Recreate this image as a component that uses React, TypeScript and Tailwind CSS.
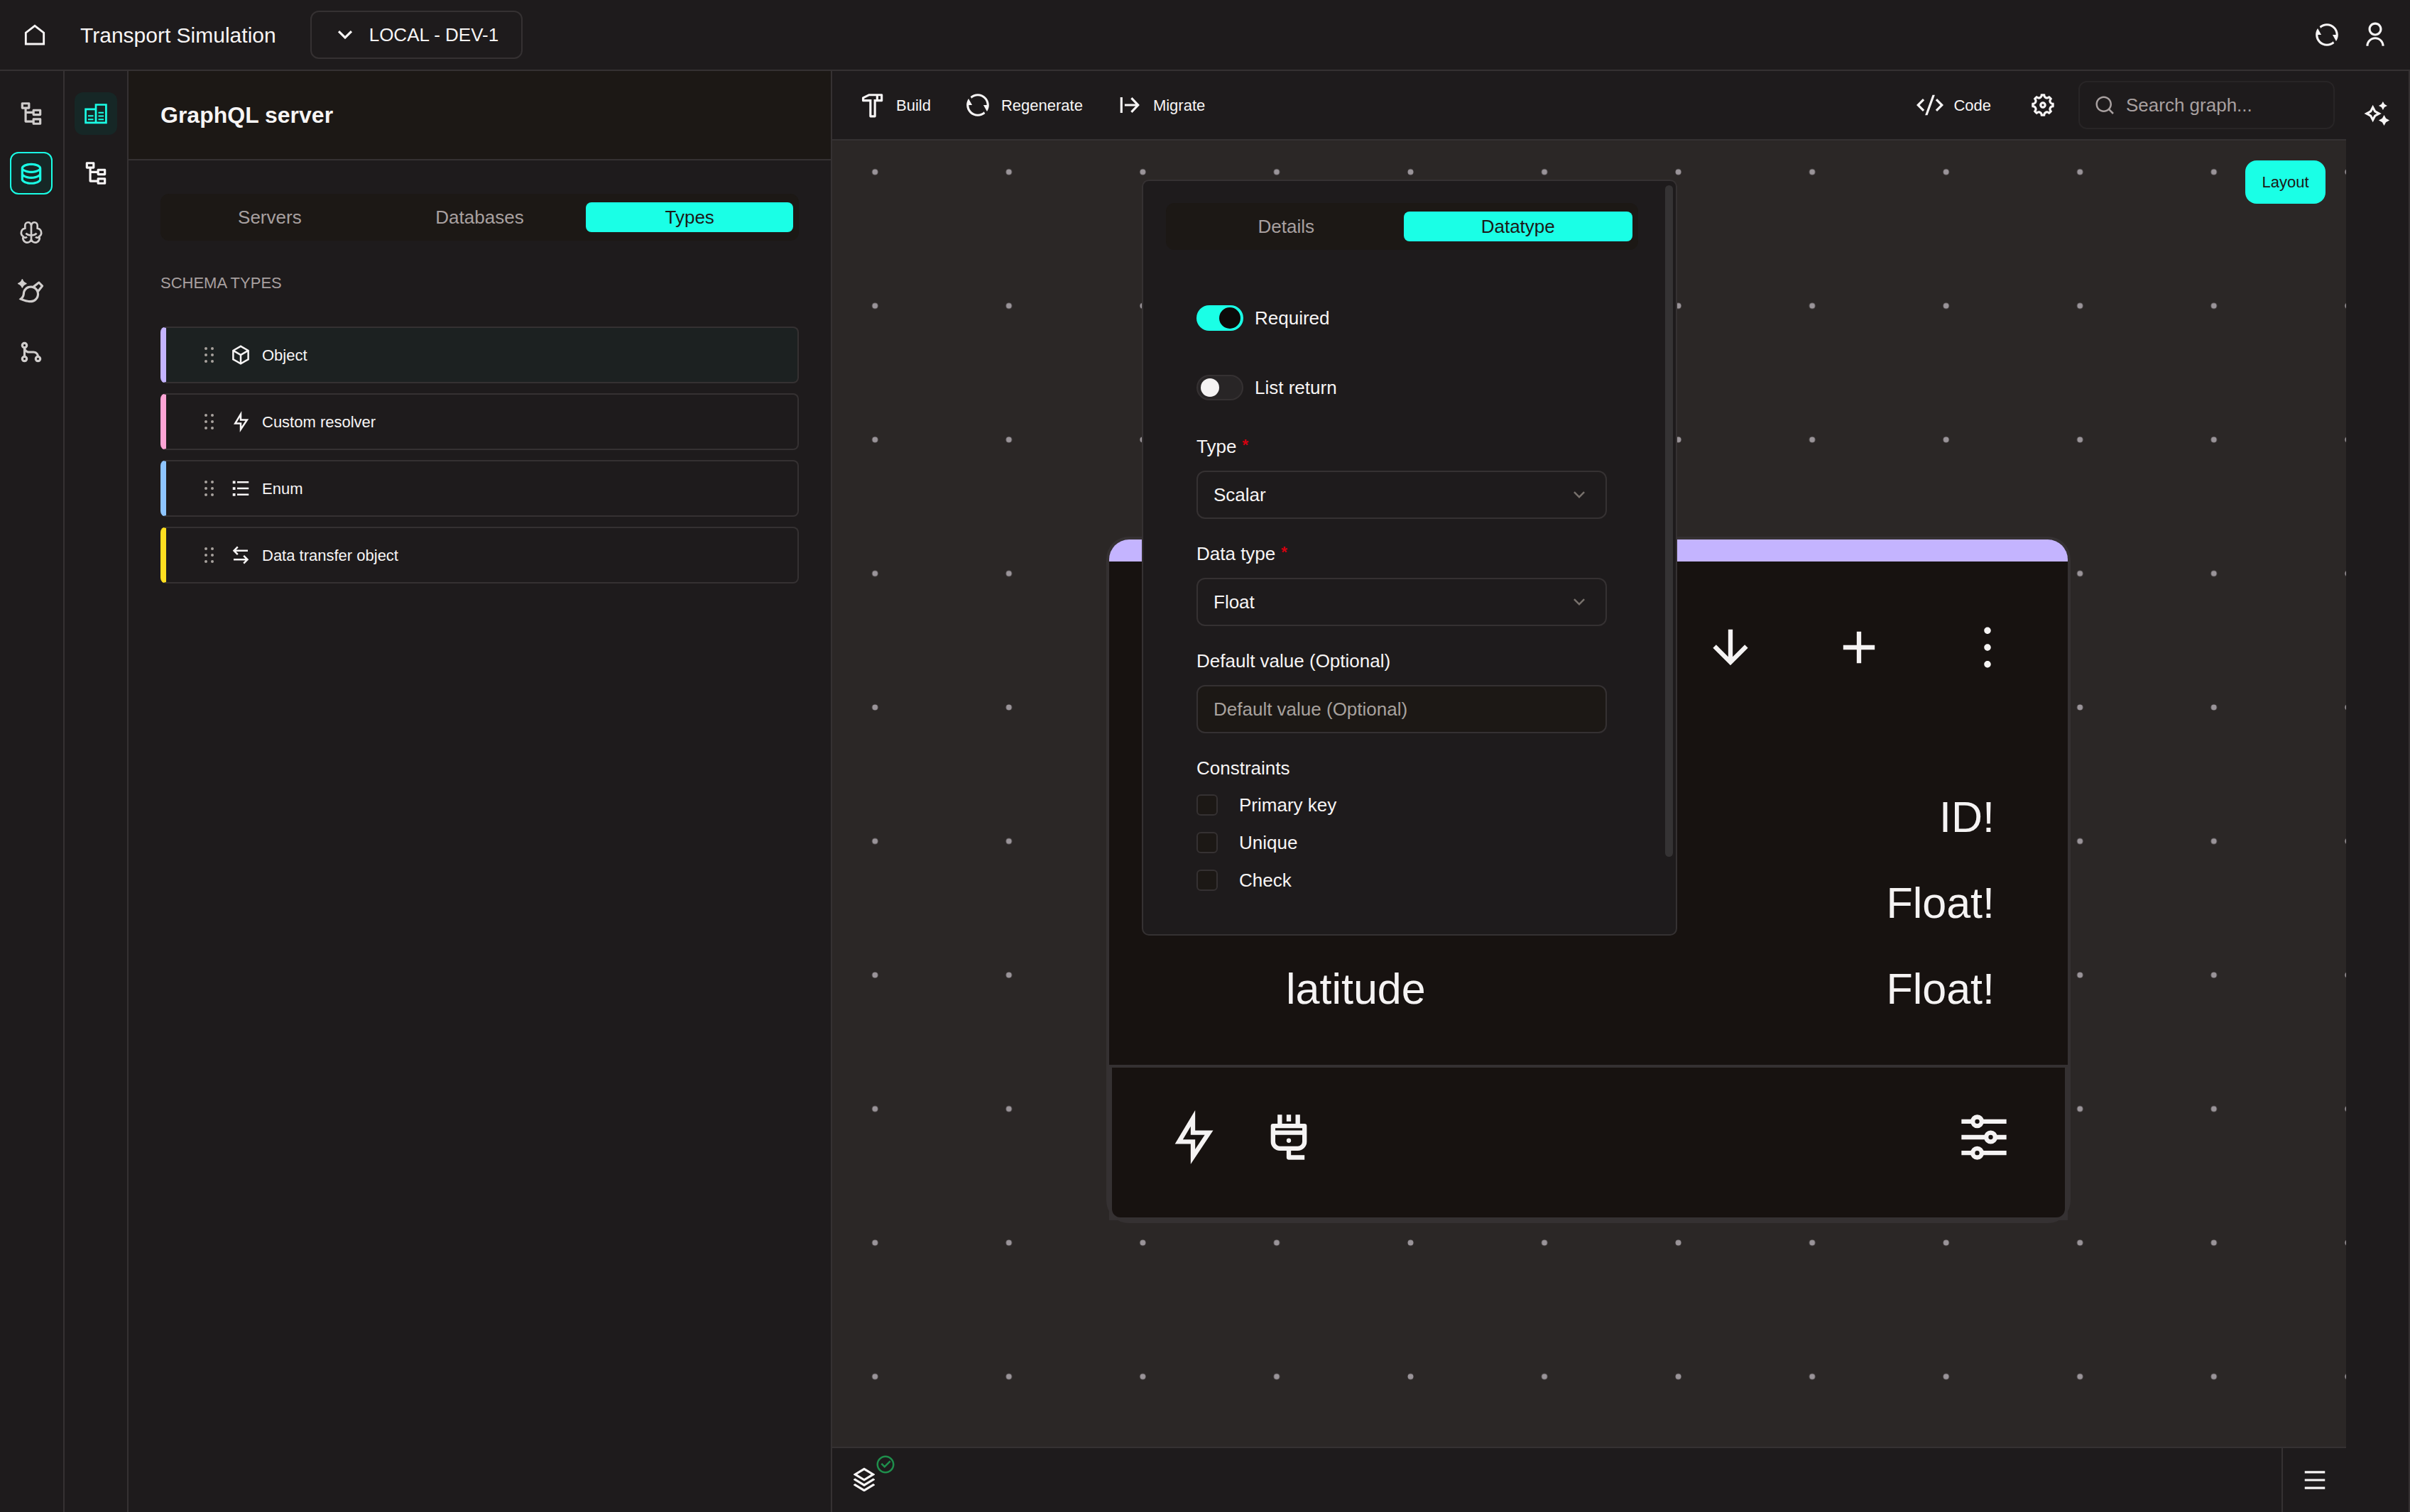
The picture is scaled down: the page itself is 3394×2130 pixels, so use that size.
import type { ReactNode } from "react";
import {
  RiAddLine,
  RiArrowDownLine,
  RiArrowDownSLine,
  RiArrowLeftRightLine,
  RiBox3Line,
  RiBrushAiLine,
  RiCheckboxCircleLine,
  RiCodeSSlashLine,
  RiDatabase2Line,
  RiFlashlightLine,
  RiGitMergeLine,
  RiHammerLine,
  RiListCheck,
  RiMenuLine,
  RiMore2Line,
  RiNodeTree,
  RiRefreshLine,
  RiSearchLine,
  RiSettings5Line,
  RiSparkling2Line,
  RiStackLine,
  RiUserLine,
} from "react-icons/ri";

const icon = "size-[38px] shrink-0";
const bigIcon = "size-[76px] shrink-0";

function HomeIcon() {
  return (
    <svg viewBox="0 0 24 24" className={icon} fill="none" stroke="currentColor" strokeWidth="1.8">
      <path d="M4 20.2V10.2L12 4L20 10.2V20.2Z" />
    </svg>
  );
}

function ServersIcon() {
  return (
    <svg viewBox="0 0 24 24" className={icon} fill="none" stroke="currentColor" strokeWidth="1.7">
      <path d="M12 20.1H2.9V8.1H12M12 20.1V4.1H21.1V20.1Z" />
      <path d="M5 14H9.8M5 17.2H9.8M14.2 11.2H19M14.2 14.2H19M14.2 17.2H19" strokeWidth="1.3" />
    </svg>
  );
}

const brainHalf =
  "M12 5.3A2.7 2.7 0 0 0 6.5 5.6V8A4 4 0 0 0 4.9 15.3A3.6 3.6 0 1 0 12 18.2M7.2 12.4Q9 14.3 12 14.2M5 15.6Q6.6 17 8.2 15.6";

function BrainIcon() {
  return (
    <svg viewBox="0 0 24 24" className={icon} fill="none" stroke="currentColor" strokeWidth="1.7">
      <path d="M12 4V20" />
      <path d={brainHalf} />
      <path d={brainHalf} transform="matrix(-1 0 0 1 24 0)" />
    </svg>
  );
}

function MigrateIcon() {
  return (
    <svg viewBox="0 0 24 24" className={icon} fill="none" stroke="currentColor" strokeWidth="2">
      <path d="M4.6 5V19M7.5 12H19M13.5 5.8L19.4 12L13.5 18.2" />
    </svg>
  );
}

function PlugIcon() {
  return (
    <svg viewBox="0 0 24 24" className={bigIcon} fill="none" stroke="currentColor" strokeWidth="2">
      <path d="M5 7H19V14A3 3 0 0 1 16 17H8A3 3 0 0 1 5 14Z" strokeLinejoin="round" />
      <path d="M5 10H19M8 2V6M12 2V5M16 2V6" />
      <path d="M12 17V21H19" strokeLinejoin="round" />
      <circle cx="12" cy="13.5" r="1" fill="currentColor" stroke="none" />
    </svg>
  );
}

function SlidersIcon() {
  return (
    <svg viewBox="0 0 24 24" className={bigIcon} fill="none" stroke="currentColor" strokeWidth="2">
      <path d="M2 5H7M11 5H22M2 12H13M17 12H22M2 19H7M11 19H22" />
      <circle cx="9" cy="5" r="2" />
      <circle cx="15" cy="12" r="2" />
      <circle cx="9" cy="19" r="2" />
    </svg>
  );
}

function Grip() {
  return (
    <svg viewBox="0 0 14 22" className="h-[22px] w-[14px] shrink-0 text-[#a8a29e]" fill="currentColor">
      {[2, 11].map((x) => [2, 11, 20].map((y) => <circle key={`${x}-${y}`} cx={x} cy={y} r="2" />))}
    </svg>
  );
}

function Header() {
  return (
    <header className="flex h-[100px] shrink-0 items-center border-b-2 border-[#353132] px-[30px]">
      <button aria-label="Home">
        <HomeIcon />
      </button>
      <h1 className="ml-[45px] text-[30px]">Transport Simulation</h1>
      <button className="ml-12 flex h-[68px] items-center gap-[15px] rounded-xl border-2 border-[#353132] pr-8 pl-7 text-[26px]">
        <RiArrowDownSLine className={icon} />
        LOCAL - DEV-1
      </button>
      <div className="ml-auto flex gap-[30px]">
        <button aria-label="Refresh">
          <RiRefreshLine className={icon} />
        </button>
        <button aria-label="Account">
          <RiUserLine className={icon} />
        </button>
      </div>
    </header>
  );
}

function RailButton({ label, className = "", children }: { label: string; className?: string; children: ReactNode }) {
  return (
    <button aria-label={label} className={`flex size-[60px] items-center justify-center rounded-xl ${className}`}>
      {children}
    </button>
  );
}

function MainRail() {
  return (
    <nav className="flex w-[91px] shrink-0 flex-col items-start gap-6 border-r-2 border-[#353132] pt-[30px] pl-[14px] text-[#d0cdcc]">
      <RailButton label="Project tree">
        <RiNodeTree className={icon} />
      </RailButton>
      <RailButton label="Data" className="border-2 border-[#1affe6] bg-[#162726] text-[#1affe6]">
        <RiDatabase2Line className={icon} />
      </RailButton>
      <RailButton label="Models">
        <BrainIcon />
      </RailButton>
      <RailButton label="Design">
        <RiBrushAiLine className={icon} />
      </RailButton>
      <RailButton label="Versions">
        <RiGitMergeLine className={icon} />
      </RailButton>
    </nav>
  );
}

function SubRail() {
  return (
    <nav className="flex w-[90px] shrink-0 flex-col items-center gap-6 border-r-2 border-[#353132] pt-[30px]">
      <RailButton label="Servers" className="bg-[#162726] text-[#1affe6]">
        <ServersIcon />
      </RailButton>
      <RailButton label="Schema tree">
        <RiNodeTree className={icon} />
      </RailButton>
    </nav>
  );
}

function Tabs({ items, active }: { items: string[]; active: string }) {
  return (
    <div role="tablist" className="flex gap-1 rounded-xl bg-[#1c1815] px-2 py-3 text-[26px]">
      {items.map((t) => (
        <button
          key={t}
          role="tab"
          aria-selected={t === active}
          className={`h-[42px] flex-1 rounded-lg ${t === active ? "bg-[#1affe6] text-[#1c1917]" : "text-[#a8a0a0]"}`}
        >
          {t}
        </button>
      ))}
    </div>
  );
}

const schemaTypes = [
  { name: "Object", Icon: RiBox3Line, style: "border-l-[#c4b4ff] bg-[#1c2121]" },
  { name: "Custom resolver", Icon: RiFlashlightLine, style: "border-l-[#fda5d5]" },
  { name: "Enum", Icon: RiListCheck, style: "border-l-[#8ec5ff]" },
  { name: "Data transfer object", Icon: RiArrowLeftRightLine, style: "border-l-[#ffdf20]" },
];

function SidePanel() {
  return (
    <aside className="w-[991px] shrink-0 border-r-2 border-[#353132]">
      <div className="flex h-[126px] items-center border-b-2 border-[#353132] bg-[#1c1815] px-[45px]">
        <h2 className="text-[32px] font-bold">GraphQL server</h2>
      </div>
      <div className="px-[45px] pt-[47px]">
        <Tabs items={["Servers", "Databases", "Types"]} active="Types" />
        <h3 className="mt-11 text-[22px] leading-8 text-[#a8a0a0]">SCHEMA TYPES</h3>
        <ul className="mt-[45px] flex flex-col gap-[14px]">
          {schemaTypes.map(({ name, Icon, style }) => (
            <li
              key={name}
              className={`flex h-20 items-center rounded-lg border-2 border-l-8 border-[#353132] pl-[54px] text-[22px] ${style}`}
            >
              <Grip />
              <Icon className="mr-[15px] ml-[22px] size-[30px]" />
              {name}
            </li>
          ))}
        </ul>
      </div>
    </aside>
  );
}

function Toolbar() {
  return (
    <div className="flex h-[98px] shrink-0 items-center border-b-2 border-[#353132] pr-4 pl-[38px] text-[22px]">
      <div className="flex gap-[47px]">
        <button className="flex items-center gap-[14px]">
          <RiHammerLine className={icon} />
          Build
        </button>
        <button className="flex items-center gap-[14px]">
          <RiRefreshLine className={icon} />
          Regenerate
        </button>
        <button className="flex items-center gap-[14px]">
          <MigrateIcon />
          Migrate
        </button>
      </div>
      <button className="ml-auto flex items-center gap-[14px]">
        <RiCodeSSlashLine className={icon} />
        Code
      </button>
      <button aria-label="Settings" className="mr-[31px] ml-[54px]">
        <RiSettings5Line className={icon} />
      </button>
      <label className="flex h-[68px] w-[361px] items-center gap-[15px] rounded-xl border-2 border-[#282526] px-5 text-[#a8a0a0]">
        <RiSearchLine className="size-[30px] shrink-0" />
        <input
          aria-label="Search graph"
          placeholder="Search graph..."
          className="w-full min-w-0 bg-transparent text-[26px] outline-none placeholder:text-[#a8a0a0]"
        />
      </label>
    </div>
  );
}

const fields = [
  { name: "", type: "ID!" },
  { name: "", type: "Float!" },
  { name: "latitude", type: "Float!" },
];

function ObjectNode() {
  return (
    <article className="absolute top-[558px] left-[386px] w-[1358px] rounded-[32px] border-4 border-[#353132] bg-[#171210] text-[#f5f3f3]">
      <div className="h-[31px] rounded-t-[28px] bg-[#c4b4ff]" />
      <div className="flex justify-end gap-[105px] pt-[83px] pr-[75px]">
        <button aria-label="Collapse">
          <RiArrowDownLine className={bigIcon} />
        </button>
        <button aria-label="Add field">
          <RiAddLine className={bigIcon} />
        </button>
        <button aria-label="More">
          <RiMore2Line className={bigIcon} />
        </button>
      </div>
      <ul className="mt-[141px] mb-[46px] pr-[103px] pl-[249px] text-[61px] leading-[121px]">
        {fields.map((f, i) => (
          <li key={i} className="flex justify-between">
            <span>{f.name}</span>
            <span>{f.type}</span>
          </li>
        ))}
      </ul>
      <footer className="bg-[#353132] p-1">
        <div className="flex h-[211px] items-center rounded-b-xl bg-[#171210] px-[76px] pb-4">
          <button aria-label="Resolvers">
            <RiFlashlightLine className={bigIcon} />
          </button>
          <button aria-label="Connections" className="ml-[59px]">
            <PlugIcon />
          </button>
          <button aria-label="Configure" className="ml-auto">
            <SlidersIcon />
          </button>
        </div>
      </footer>
    </article>
  );
}

function Switch({ label, on = false }: { label: string; on?: boolean }) {
  return (
    <label className="flex h-9 items-center gap-4">
      <input type="checkbox" role="switch" defaultChecked={on} className="peer sr-only" />
      <span
        className={`flex h-9 w-[66px] items-center rounded-full ${
          on ? "justify-end bg-[#1affe6] px-1" : "border-2 border-[#353132] bg-[#282526] px-1"
        }`}
      >
        <span className={on ? "size-[30px] rounded-full bg-[#0c0a09]" : "size-[26px] rounded-full bg-[#f5f3f3]"} />
      </span>
      {label}
    </label>
  );
}

function SelectField({ id, label, value }: { id: string; label: string; value: string }) {
  return (
    <div>
      <label htmlFor={id} className="flex gap-2 leading-9">
        {label}
        <span className="text-[22px] leading-8 font-bold text-[#d4000f]">*</span>
      </label>
      <div className="relative mt-4">
        <select
          id={id}
          defaultValue={value}
          className="block h-[68px] w-full appearance-none rounded-xl border-2 border-[#353132] bg-transparent px-[22px]"
        >
          <option>{value}</option>
        </select>
        <RiArrowDownSLine className="pointer-events-none absolute top-[19px] right-6 size-[30px] text-[#78716c]" />
      </div>
    </div>
  );
}

function DatatypePopover() {
  return (
    <section className="absolute top-[55px] left-[436px] w-[754px] rounded-[10px] border-2 border-[#353132] bg-[#1e1b1c] pt-[31px] pr-[53px] pb-[58px] pl-8 text-[26px]">
      <Tabs items={["Details", "Datatype"]} active="Datatype" />
      <form className="mt-[78px] mr-[44px] ml-[43px]">
        <div className="flex flex-col gap-[62px]">
          <Switch label="Required" on />
          <Switch label="List return" />
        </div>
        <div className="mt-[47px] flex flex-col gap-[31px]">
          <SelectField id="type" label="Type" value="Scalar" />
          <SelectField id="data-type" label="Data type" value="Float" />
          <div>
            <label htmlFor="default-value" className="block leading-9">
              Default value (Optional)
            </label>
            <input
              id="default-value"
              placeholder="Default value (Optional)"
              className="mt-4 block h-[68px] w-full rounded-xl border-2 border-[#353132] bg-[#1c1815] px-[22px] placeholder:text-[#a8a29e]"
            />
          </div>
          <fieldset>
            <legend className="leading-9">Constraints</legend>
            <div className="mt-4 flex flex-col gap-[17px]">
              {["Primary key", "Unique", "Check"].map((c) => (
                <label key={c} className="flex h-9 items-center gap-[30px]">
                  <input
                    type="checkbox"
                    className="size-[30px] appearance-none rounded-md border-2 border-[#353132] bg-[#1c1815]"
                  />
                  {c}
                </label>
              ))}
            </div>
          </fieldset>
        </div>
      </form>
      <div className="absolute top-1.5 right-1 h-[946px] w-[11px] rounded-full bg-[#353334]" />
    </section>
  );
}

function DotGrid() {
  return (
    <svg className="absolute inset-0 size-full text-[#9a9499]" aria-hidden="true">
      <defs>
        <pattern id="dots" x="-34" y="-50" width="188.55" height="188.55" patternUnits="userSpaceOnUse">
          <circle cx="94.3" cy="94.3" r="4" fill="currentColor" />
        </pattern>
      </defs>
      <rect width="100%" height="100%" fill="url(#dots)" />
    </svg>
  );
}

function Canvas() {
  return (
    <div className="relative min-h-[1840px] flex-1 overflow-hidden bg-[#2b2726]">
      <DotGrid />
      <ObjectNode />
      <DatatypePopover />
      <button className="absolute top-7 right-[29px] h-[61px] w-[113px] rounded-2xl bg-[#1affe6] text-[22px] text-[#1c1917]">
        Layout
      </button>
    </div>
  );
}

function StatusBar() {
  return (
    <footer className="flex h-[92px] shrink-0 items-center justify-between border-t-2 border-[#353132] pl-[26px]">
      <button aria-label="Layers" className="relative">
        <RiStackLine className={icon} />
        <RiCheckboxCircleLine className="absolute -top-[18px] left-[34px] size-[30px] text-[#1f8f4c]" />
      </button>
      <button aria-label="Menu" className="flex h-full w-[91px] items-center justify-center border-l-2 border-[#353132]">
        <RiMenuLine className={icon} />
      </button>
    </footer>
  );
}

export default function App() {
  return (
    <div className="flex min-h-screen flex-col bg-[#1e1b1c] font-['Liberation_Sans',Arial,sans-serif] text-[#f7f5f5]">
      <Header />
      <div className="flex flex-1">
        <MainRail />
        <SubRail />
        <SidePanel />
        <main className="flex min-w-0 flex-1 flex-col">
          <Toolbar />
          <Canvas />
          <StatusBar />
        </main>
        <aside className="flex w-[90px] shrink-0 flex-col items-center border-r-2 border-[#353132] pt-[30px]">
          <RailButton label="Assistant">
            <RiSparkling2Line className={icon} />
          </RailButton>
        </aside>
      </div>
    </div>
  );
}
